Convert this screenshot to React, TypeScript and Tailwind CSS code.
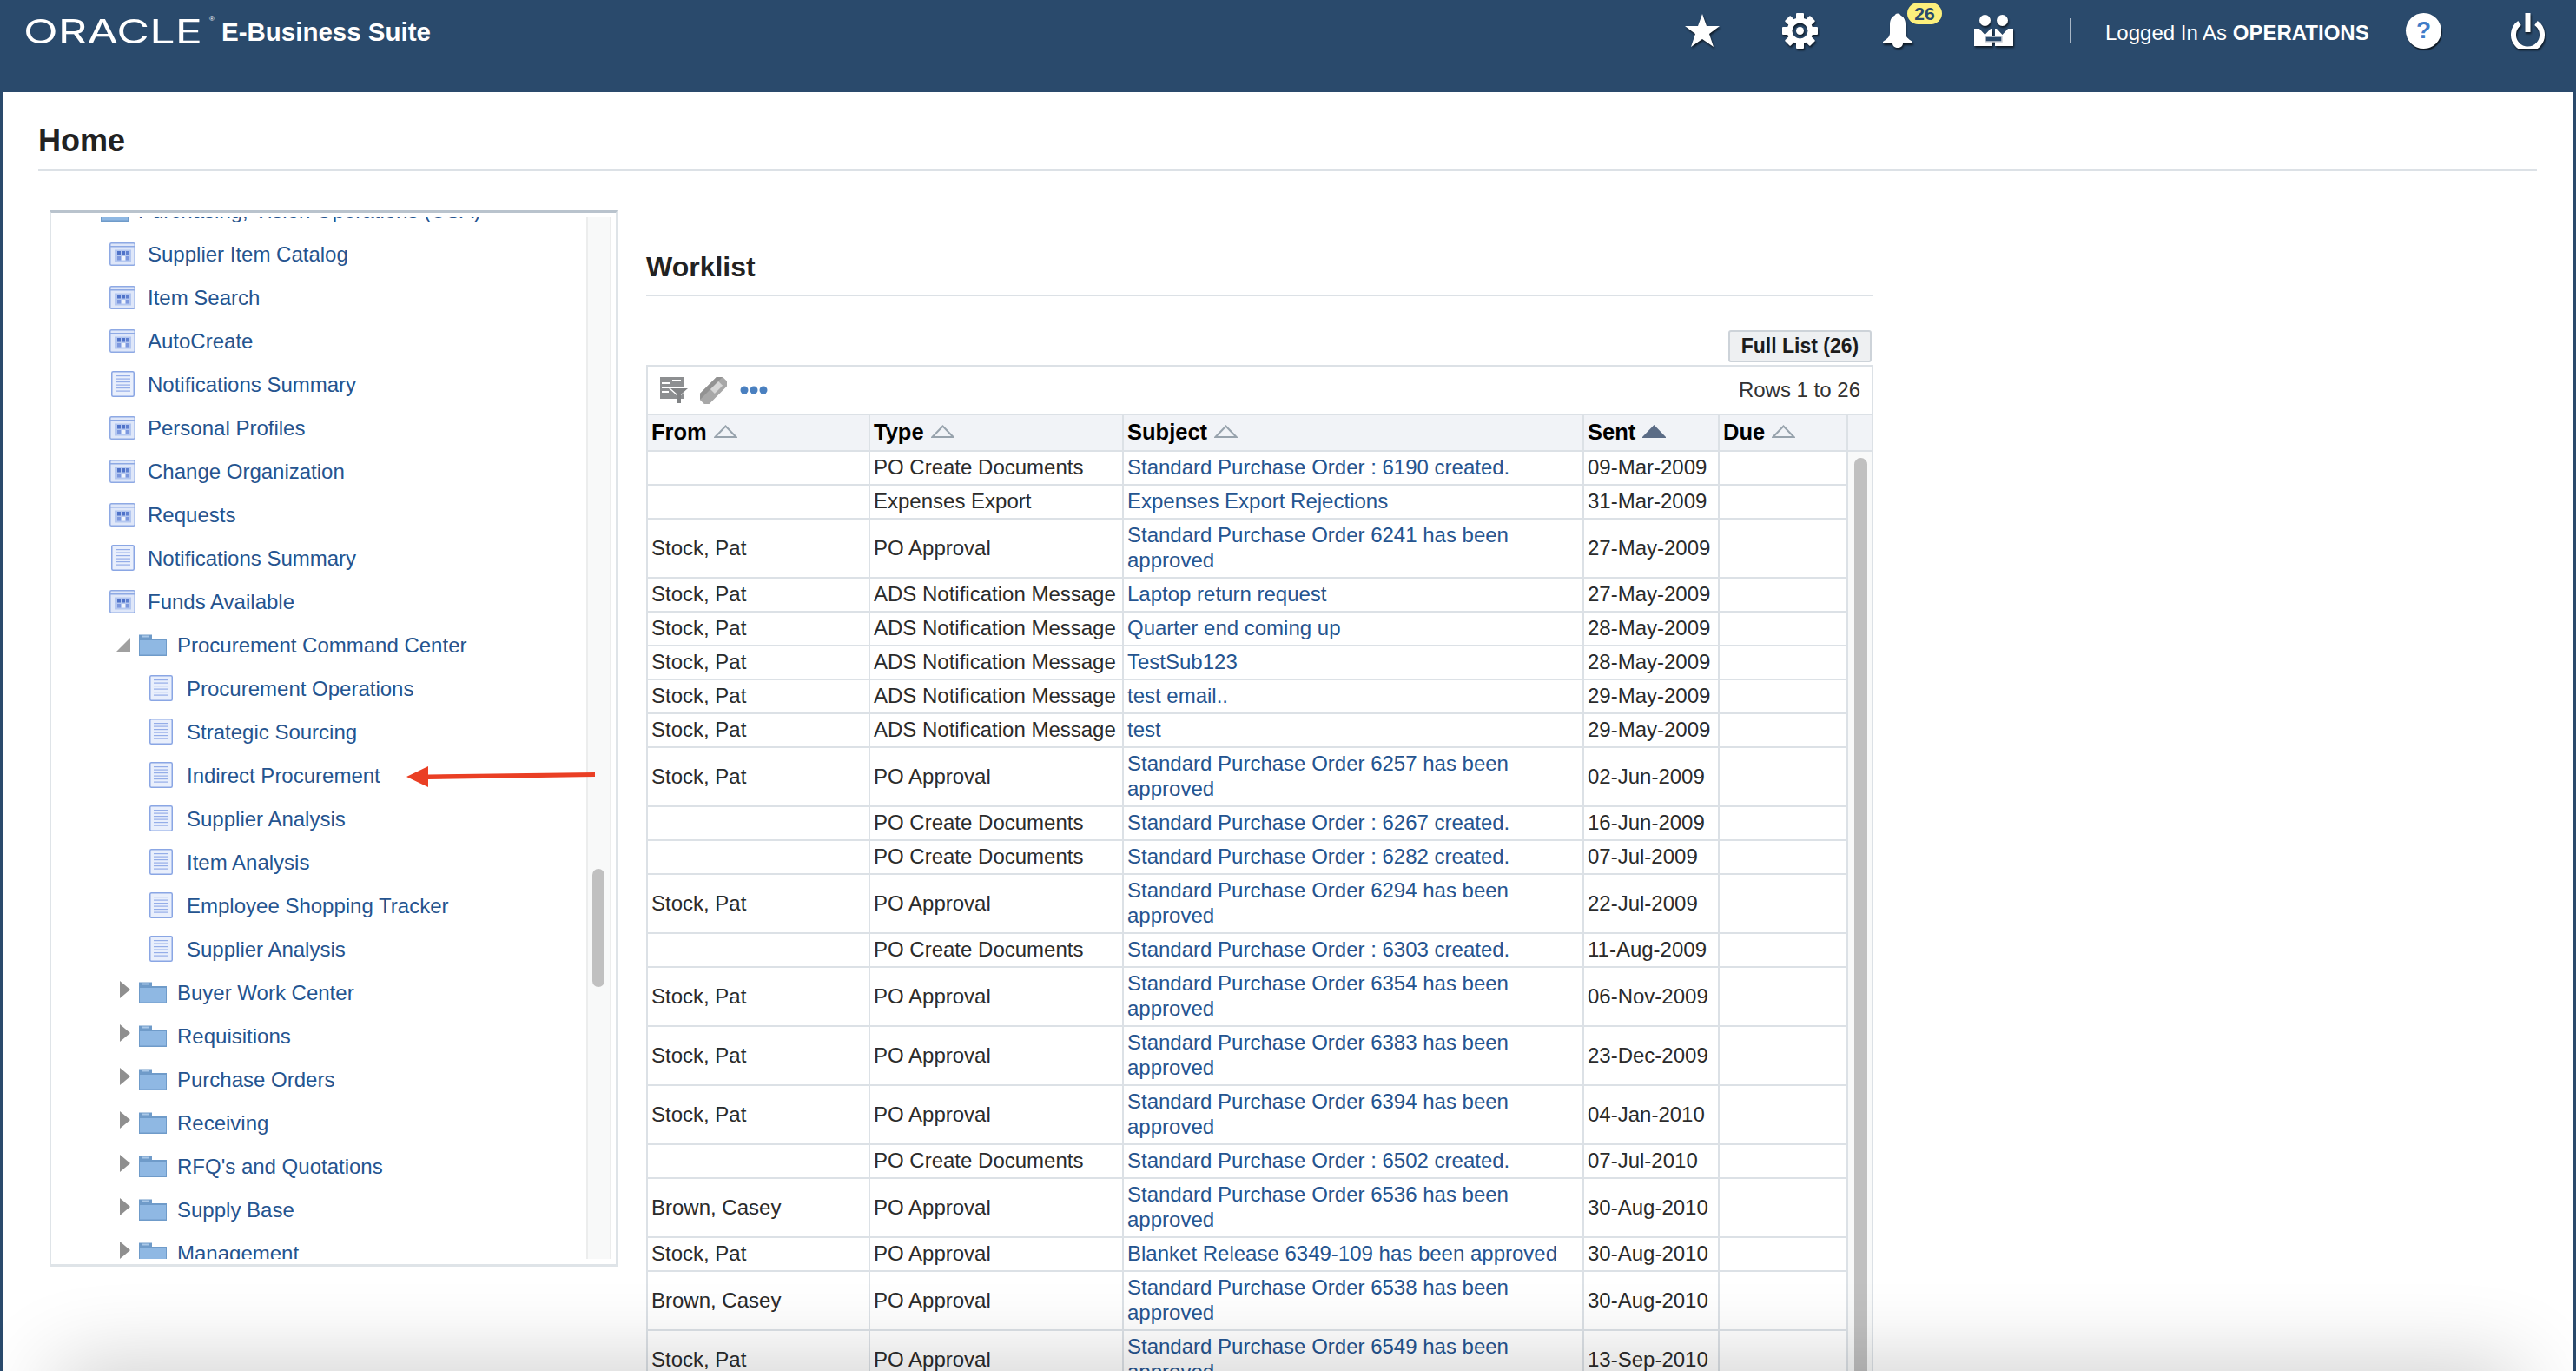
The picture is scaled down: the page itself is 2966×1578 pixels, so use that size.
const appRows = [
  { label: "Supplier Item Catalog", icon: "app" },
  { label: "Item Search", icon: "app" },
  { label: "AutoCreate", icon: "app" },
  { label: "Notifications Summary", icon: "doc" },
  { label: "Personal Profiles", icon: "app" },
  { label: "Change Organization", icon: "app" },
  { label: "Requests", icon: "app" },
  { label: "Notifications Summary", icon: "doc" },
  { label: "Funds Available", icon: "app" },
];

const commandCenter = [
  "Procurement Operations",
  "Strategic Sourcing",
  "Indirect Procurement",
  "Supplier Analysis",
  "Item Analysis",
  "Employee Shopping Tracker",
  "Supplier Analysis",
];

const folders = [
  "Buyer Work Center",
  "Requisitions",
  "Purchase Orders",
  "Receiving",
  "RFQ's and Quotations",
  "Supply Base",
  "Management",
];

const PO = "Standard Purchase Order";
const worklist = [
  ["", "PO Create Documents", `${PO} : 6190 created.`, "09-Mar-2009"],
  ["", "Expenses Export", "Expenses Export Rejections", "31-Mar-2009"],
  ["Stock, Pat", "PO Approval", `${PO} 6241 has been approved`, "27-May-2009"],
  ["Stock, Pat", "ADS Notification Message", "Laptop return request", "27-May-2009"],
  ["Stock, Pat", "ADS Notification Message", "Quarter end coming up", "28-May-2009"],
  ["Stock, Pat", "ADS Notification Message", "TestSub123", "28-May-2009"],
  ["Stock, Pat", "ADS Notification Message", "test email..", "29-May-2009"],
  ["Stock, Pat", "ADS Notification Message", "test", "29-May-2009"],
  ["Stock, Pat", "PO Approval", `${PO} 6257 has been approved`, "02-Jun-2009"],
  ["", "PO Create Documents", `${PO} : 6267 created.`, "16-Jun-2009"],
  ["", "PO Create Documents", `${PO} : 6282 created.`, "07-Jul-2009"],
  ["Stock, Pat", "PO Approval", `${PO} 6294 has been approved`, "22-Jul-2009"],
  ["", "PO Create Documents", `${PO} : 6303 created.`, "11-Aug-2009"],
  ["Stock, Pat", "PO Approval", `${PO} 6354 has been approved`, "06-Nov-2009"],
  ["Stock, Pat", "PO Approval", `${PO} 6383 has been approved`, "23-Dec-2009"],
  ["Stock, Pat", "PO Approval", `${PO} 6394 has been approved`, "04-Jan-2010"],
  ["", "PO Create Documents", `${PO} : 6502 created.`, "07-Jul-2010"],
  ["Brown, Casey", "PO Approval", `${PO} 6536 has been approved`, "30-Aug-2010"],
  ["Stock, Pat", "PO Approval", "Blanket Release 6349-109 has been approved", "30-Aug-2010"],
  ["Brown, Casey", "PO Approval", `${PO} 6538 has been approved`, "30-Aug-2010"],
  ["Stock, Pat", "PO Approval", `${PO} 6549 has been approved`, "13-Sep-2010"],
];

const headerIcon = "shrink-0 drop-shadow-[1px_2px_1px_rgba(0,0,0,0.65)]";

function StarIcon() {
  return (
    <svg width="42" height="40" viewBox="0 0 42 40" className={`ml-auto ${headerIcon}`}>
      <polygon points="21,1 26,15 41,15 29,24 34,39 21,30 8,39 13,24 1,15 16,15" fill="#fff" />
    </svg>
  );
}

function GearIcon() {
  return (
    <svg width="41" height="41" viewBox="0 0 41 41" className={`ml-[71px] ${headerIcon}`}>
      {[0, 45, 90, 135, 180, 225, 270, 315].map((a) => (
        <rect key={a} x="16" y="0" width="9" height="10" rx="1" fill="#fff" transform={`rotate(${a} 20.5 20.5)`} />
      ))}
      <circle cx="20.5" cy="20.5" r="12" fill="none" stroke="#fff" strokeWidth="6" />
      <circle cx="20.5" cy="20.5" r="4.5" fill="#fff" />
    </svg>
  );
}

function BellIcon() {
  return (
    <div className="relative ml-[74px] h-[40px] w-[36px] shrink-0">
      <svg width="36" height="40" viewBox="0 0 36 40" className={headerIcon}>
        <circle cx="18" cy="4" r="3.5" fill="#fff" />
        <path d="M18 2c-6 0-9 5-9 11v10c0 4-3 7-8 10v2h34v-2c-5-3-8-6-8-10V13c0-6-3-11-9-11z" fill="#fff" />
        <path d="M12 35h12c0 3-3 5-6 5s-6-2-6-5z" fill="#fff" />
      </svg>
      <span className="absolute left-[29px] top-[-12px] flex h-[25px] w-[40px] items-center justify-center rounded-full bg-[#fdf07c] text-[21px] font-bold leading-none text-[#2a4a6c]">
        26
      </span>
    </div>
  );
}

function PeopleIcon() {
  return (
    <svg width="45" height="36" viewBox="0 0 45 36" className={`ml-[70px] ${headerIcon}`}>
      <circle cx="12.5" cy="6.5" r="6.5" fill="#fff" />
      <circle cx="32.5" cy="6.5" r="6.5" fill="#fff" />
      <path d="M0 16h6l6.5 7 6.5-7h2v20H0z" fill="#fff" />
      <path d="M45 16h-6l-6.5 7-6.5-7h-2v20h21z" fill="#fff" />
      <rect x="13" y="25" width="19" height="6" fill="#2a4a6c" stroke="#c9ced6" strokeWidth="1.5" />
    </svg>
  );
}

function HelpIcon() {
  return (
    <div className="ml-[42px] flex h-[41px] w-[41px] shrink-0 items-center justify-center rounded-full bg-white text-[28px] font-bold leading-none text-[#3f7cc8] shadow-[1px_2px_1px_rgba(0,0,0,0.65)]">
      ?
    </div>
  );
}

function PowerIcon() {
  return (
    <svg width="41" height="41" viewBox="0 0 41 41" className={`ml-[79px] ${headerIcon}`}>
      <path d="M11 11.5a16.5 16.5 0 1 0 19 0" fill="none" stroke="#fff" strokeWidth="6" />
      <rect x="17.5" y="0" width="6" height="22" fill="#fff" />
    </svg>
  );
}

function AppIcon() {
  return (
    <svg width="30" height="27" viewBox="0 0 30 27">
      <rect x="0.75" y="0.75" width="28.5" height="25.5" rx="1.5" fill="#dfe7f9" stroke="#8ea9e4" strokeWidth="1.5" />
      <rect x="1" y="4" width="28" height="1.5" fill="#8ea9e4" />
      <rect x="6" y="8.5" width="19" height="14" fill="#b4c7f0" />
      <rect x="9" y="10" width="4" height="4.5" fill="#4f72c8" />
      <rect x="14" y="10" width="4" height="4.5" fill="#4f72c8" />
      <rect x="19" y="10" width="4" height="4.5" fill="#5f80d0" />
      <rect x="9" y="16" width="4" height="4.5" fill="#7d98de" />
      <rect x="14" y="16" width="4" height="4.5" fill="#f0f4fc" />
      <rect x="19" y="16" width="4" height="4.5" fill="#7d98de" />
    </svg>
  );
}

function DocIcon() {
  return (
    <svg width="27" height="30" viewBox="0 0 27 30">
      <rect x="0.75" y="0.75" width="25.5" height="28.5" rx="1.5" fill="#e9effc" stroke="#8aa6e4" strokeWidth="1.5" />
      {[5, 8.5, 12, 15.5, 19, 22.5].map((y) => (
        <rect key={y} x="5" y={y} width="17" height="1.2" fill="#94ade8" />
      ))}
    </svg>
  );
}

function FolderIcon() {
  return (
    <svg width="32" height="26" viewBox="0 0 32 26" className="shrink-0">
      <path d="M0 1.5h15v4.5H0z" fill="#6f9bc9" />
      <rect x="3" y="2.5" width="9" height="2" fill="#a9c8e8" />
      <rect x="0" y="6" width="32" height="20" fill="#6f9bc9" />
      <rect x="1" y="8" width="30" height="16.5" fill="#8fb8e3" />
    </svg>
  );
}

function Caret({ open }: { open?: boolean }) {
  return open ? (
    <svg width="16" height="16" viewBox="0 0 16 16" className="shrink-0">
      <polygon points="16,0 16,16 0,16" fill="#a0a0a0" />
    </svg>
  ) : (
    <svg width="16" height="20" viewBox="0 0 16 20" className="mt-[-6px] shrink-0">
      <polygon points="4,0 16,10 4,20" fill="#8f8f8f" />
    </svg>
  );
}

function FolderRow({ label, open }: { label: string; open?: boolean }) {
  return (
    <div className="flex h-[50px] items-center pl-[75px]">
      <Caret open={open} />
      <span className="ml-[10px]"><FolderIcon /></span>
      <span className="ml-[12px] whitespace-nowrap">{label}</span>
    </div>
  );
}

function NavTree() {
  return (
    <div className="min-w-0 flex-1 overflow-hidden text-[24px] leading-[29px] text-[#25548f]">
      <div className="mt-[-33px]">
        <div className="flex h-[50px] items-center pl-[57px]">
          <FolderIcon />
          <span className="ml-[11px] whitespace-nowrap">Purchasing, Vision Operations (USA)</span>
        </div>
        {appRows.map((row, i) => (
          <div key={i} className="flex h-[50px] items-center gap-[14px] pl-[67px]">
            <span className="flex w-[30px] justify-center">{row.icon === "app" ? <AppIcon /> : <DocIcon />}</span>
            <span className="whitespace-nowrap">{row.label}</span>
          </div>
        ))}
        <FolderRow label="Procurement Command Center" open />
        {commandCenter.map((label, i) => (
          <div key={i} className="flex h-[50px] items-center gap-[15px] pl-[111px]">
            <span className="flex w-[30px] justify-center"><DocIcon /></span>
            <span className="whitespace-nowrap">{label}</span>
          </div>
        ))}
        {folders.map((label) => (
          <FolderRow key={label} label={label} />
        ))}
      </div>
    </div>
  );
}

function SortMark({ active }: { active?: boolean }) {
  return (
    <svg width="27" height="15" viewBox="0 0 27 15" className="ml-[8px] inline-block align-[2px]">
      <polygon
        points="13.5,1.5 25.5,14 1.5,14"
        fill={active ? "#5b6c86" : "none"}
        stroke={active ? "#5b6c86" : "#98a3ad"}
        strokeWidth="2"
      />
    </svg>
  );
}

function ToolbarIcons() {
  return (
    <div className="flex items-center">
      <svg width="32" height="30" viewBox="0 0 32 30" className="ml-[14px]">
        <rect x="0" y="0" width="28" height="25" fill="#8d8f91" />
        <rect x="2" y="6" width="10" height="2" fill="#fff" />
        <rect x="14" y="3" width="10" height="2" fill="#fff" />
        <rect x="2" y="11" width="10" height="2" fill="#fff" />
        <rect x="2" y="16" width="8" height="2" fill="#fff" />
        <polygon points="10,11 32,11 32,13 24,21 24,30 19,30 19,21 10,13" fill="#fff" />
        <polygon points="12,13 32,13 24,20 24,30 20,30 20,20" fill="#818385" />
      </svg>
      <svg width="31" height="31" viewBox="0 0 31 31" className="ml-[14px]">
        <g transform="rotate(45 15.5 15.5)">
          <rect x="7" y="-3" width="16" height="37" rx="3" fill="#a8a8a8" />
          <rect x="7" y="-3" width="5" height="37" rx="2" fill="#929292" />
          <rect x="12" y="4" width="7" height="13" fill="#d6d6d6" />
        </g>
      </svg>
      <svg width="32" height="10" viewBox="0 0 32 10" className="ml-[15px]">
        <circle cx="5" cy="5" r="4.5" fill="#4a80c0" />
        <circle cx="16" cy="5" r="4.5" fill="#4a80c0" />
        <circle cx="27" cy="5" r="4.5" fill="#4a80c0" />
      </svg>
    </div>
  );
}

function WorklistTable() {
  const th = "h-[42px] border-r-2 border-b-2 border-[#dce1e6] bg-[#f1f3f7] pl-[4px] pr-0 pt-0 pb-[2px] text-left text-[25.5px] font-bold leading-[29px] text-black";
  const td = "border-r-2 border-b-2 border-[#dce1e6] pl-[4px] pr-[5px] pt-0 pb-[2px] align-middle whitespace-nowrap";
  return (
    <div className="flex border-x-2 border-[#dce1e6]">
      <table className="w-[1382px] shrink-0 table-fixed border-separate border-spacing-0 text-[24px] leading-[29px] text-[#2b2b2b]">
        <colgroup>
          <col className="w-[256px]" />
          <col className="w-[292px]" />
          <col className="w-[530px]" />
          <col className="w-[156px]" />
          <col className="w-[148px]" />
        </colgroup>
        <thead>
          <tr>
            <th className={th}>From<SortMark /></th>
            <th className={th}>Type<SortMark /></th>
            <th className={th}>Subject<SortMark /></th>
            <th className={th}>Sent<SortMark active /></th>
            <th className={th}>Due<SortMark /></th>
          </tr>
        </thead>
        <tbody>
          {worklist.map((row, i) => {
            const tall = row[2].length > 44;
            return (
              <tr key={i} className={tall ? "h-[68px]" : "h-[39px]"}>
                <td className={td}>{row[0]}</td>
                <td className={td}>{row[1]}</td>
                <td className="border-r-2 border-b-2 border-[#dce1e6] pl-[4px] pr-[5px] pt-0 pb-[2px] align-middle text-[#25548f]">{row[2]}</td>
                <td className={td}>{row[3]}</td>
                <td className={td}></td>
              </tr>
            );
          })}
        </tbody>
      </table>
      <div className="flex w-[27px] shrink-0 flex-col">
        <div className="h-[42px] shrink-0 border-b-2 border-[#dce1e6] bg-[#f1f3f7]" />
        <div className="flex-1 bg-[#f8f9f9] pl-[7px] pt-[7px]">
          <div className="h-full w-[15px] rounded-t-full bg-[#c0c0c0]" />
        </div>
      </div>
    </div>
  );
}

export default function App() {
  return (
    <div className="relative h-[1578px] w-[2966px] overflow-hidden bg-white font-['Liberation_Sans',Arial,sans-serif]">
      <header className="flex h-[106px] bg-[#2a4a6c] text-white">
        <div className="flex h-[70px] w-full items-center pr-[35px]">
          <div className="ml-[27px] mt-[3px] flex w-[228px] shrink-0 items-start">
            <span className="origin-left scale-x-[1.35] font-['Inter',sans-serif] text-[38.5px] font-normal leading-none">ORACLE</span>
            <span className="ml-auto mr-[8px] mt-[1px] text-[8px] leading-none">®</span>
          </div>
          <span className="mt-[4px] text-[29.5px] font-bold leading-none">E-Business Suite</span>
          <StarIcon />
          <GearIcon />
          <BellIcon />
          <PeopleIcon />
          <div className="ml-[65px] h-[28px] w-[2px] shrink-0 bg-[#a9b7c6]" />
          <div className="ml-[39px] mt-[5px] w-[304px] shrink-0 whitespace-nowrap text-[24px] leading-none">
            Logged In As <span className="font-bold">OPERATIONS</span>
          </div>
          <HelpIcon />
          <PowerIcon />
        </div>
      </header>

      <main className="h-[1472px] border-l-[3px] border-r-[4px] border-[#2a4a6c] pl-[41px] pr-[41px]">
        <h1 className="flex h-[91px] items-center border-b-2 border-[#dce1e6] pt-[23px] text-[36px] font-bold leading-none text-[#222]">
          Home
        </h1>

        <div className="flex items-start pl-[13px] pt-[45px]">
          <section className="flex h-[1216px] w-[654px] shrink-0 border-x-2 border-b-[3px] border-t-[3px] border-[#dfe4e8] border-t-[#b9c3cd] pr-[5px] pt-[5px] pb-[6px]">
            <NavTree />
            <div className="w-[29px] shrink-0 border-x-2 border-x-[#eceded] bg-[#f8f9f9] pl-[5px] pt-[750px]">
              <div className="h-[136px] w-[14px] rounded-full bg-[#c0c0c0]" />
            </div>
          </section>

          <section className="ml-[33px] w-[1413px] shrink-0">
            <h2 className="flex h-[99px] items-center border-b-2 border-[#dce1e6] pt-[33px] text-[32px] font-bold leading-none text-[#222]">
              Worklist
            </h2>
            <div className="flex justify-end pr-[2px] pt-[39px]">
              <button className="h-[37px] w-[165px] rounded-[3px] border-2 border-[#cdd3d9] bg-[#eef0f2] text-[23px] font-bold leading-none text-[#1c1c1c]">
                Full List (26)
              </button>
            </div>
            <div className="mt-[3px] flex h-[56px] items-center justify-between border-2 border-b-0 border-[#dce1e6] pr-[13px]">
              <ToolbarIcons />
              <span className="text-[24px] leading-none text-[#333]">Rows 1 to 26</span>
            </div>
            <div className="border-t-2 border-[#dce1e6]" />
            <WorklistTable />
          </section>
        </div>
      </main>

      {/* soft shadow that rises from under the bottom edge */}
      <div className="pointer-events-none absolute left-[66px] right-[66px] top-[1578px] h-[80px] shadow-[0_0_100px_rgba(0,0,0,0.24)]" />

      {/* red annotation arrow */}
      <svg width="218" height="24" viewBox="0 0 218 24" className="pointer-events-none absolute left-[468px] top-[882px]">
        <polygon points="0,12 25,0 25,9.5 217,7 217,12 25,15 25,24" fill="#ea3f24" />
      </svg>
    </div>
  );
}
